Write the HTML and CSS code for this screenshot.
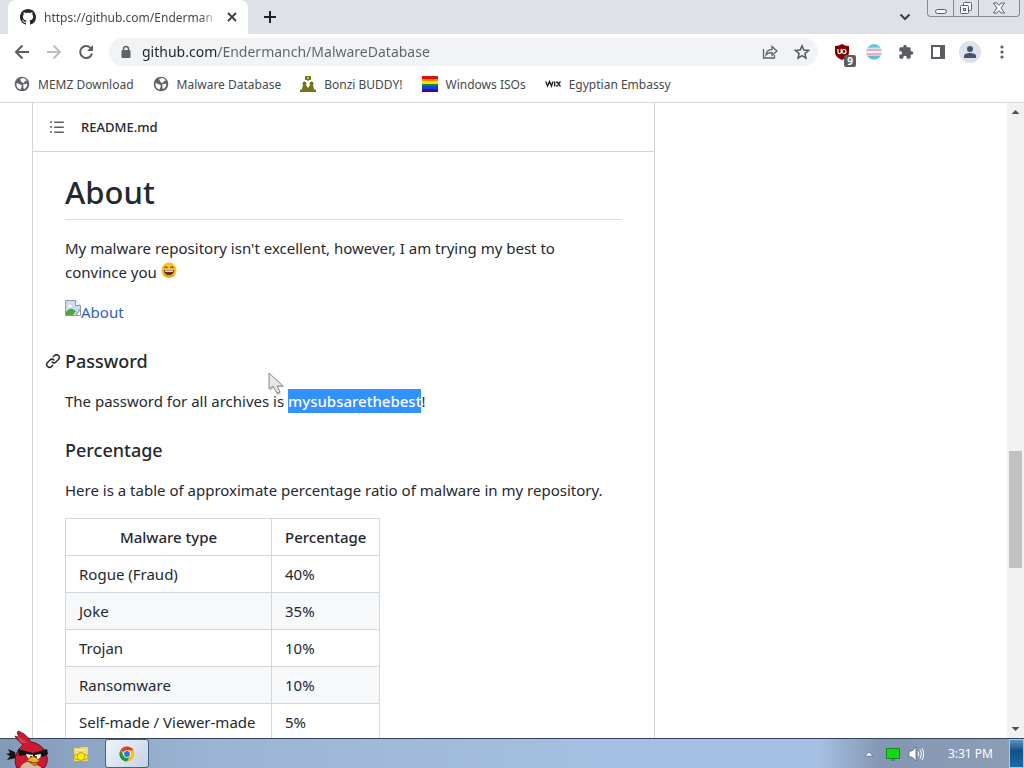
FILE: index.html
```html
<!DOCTYPE html>
<html lang="en">
<head>
  <meta charset="UTF-8" />
  <meta name="viewport" content="width=device-width, initial-scale=1.0" />
  <title>Endermanch/MalwareDatabase</title>
  <link rel="stylesheet" href="styles.css">
</head>
<body>
  <header class="browser">
    <div class="tabstrip">
      <div class="tab">
        <svg class="tab-icon" width="16" height="16" viewBox="0 0 16 16" fill="#24292f"><path d="M8 0C3.58 0 0 3.58 0 8c0 3.54 2.29 6.53 5.47 7.59.4.07.55-.17.55-.38 0-.19-.01-.82-.01-1.49-2.01.37-2.53-.49-2.69-.94-.09-.23-.48-.94-.82-1.13-.28-.15-.68-.52-.01-.53.63-.01 1.08.58 1.23.82.72 1.21 1.87.87 2.33.66.07-.52.28-.87.51-1.07-1.78-.2-3.64-.89-3.64-3.95 0-.87.31-1.59.82-2.15-.08-.2-.36-1.02.08-2.12 0 0 .67-.21 2.2.82.64-.18 1.32-.27 2-.27s1.36.09 2 .27c1.53-1.04 2.2-.82 2.2-.82.44 1.1.16 1.92.08 2.12.51.56.82 1.27.82 2.15 0 3.07-1.87 3.75-3.65 3.95.29.25.54.73.54 1.48 0 1.07-.01 1.93-.01 2.2 0 .21.15.46.55.38A8.01 8.01 0 0 0 16 8c0-4.42-3.58-8-8-8z"/></svg>
        <span class="tab-title">https://github.com/Enderman</span>
        <button class="icon-btn tab-close" aria-label="Close tab">
          <svg width="10" height="10" viewBox="0 0 10 10" stroke="#3c4043" stroke-width="1.8"><path d="M1 1l8 8M9 1l-8 8"/></svg>
        </button>
      </div>
      <button class="icon-btn new-tab" aria-label="New tab">
        <svg width="14" height="14" viewBox="0 0 14 14" stroke="#202124" stroke-width="2"><path d="M7 1v12M1 7h12"/></svg>
      </button>
      <button class="icon-btn tab-search" aria-label="Search tabs">
        <svg width="12" height="8" viewBox="0 0 12 8" fill="none" stroke="#3c4043" stroke-width="2"><path d="M1.500 1.500L6 6l4.500-4.500"/></svg>
      </button>
      <div class="window-buttons">
        <button aria-label="Minimize"><svg width="14" height="14" viewBox="0 0 14 14" fill="#fff" stroke="#5a6068"><rect x="1.500" y="8.500" width="11" height="4" rx="2"/></svg></button>
        <button aria-label="Restore"><svg width="14" height="14" viewBox="0 0 14 14" fill="#fff" stroke="#5a6068"><rect x="4.500" y="1.500" width="8" height="8" rx="1"/><rect x="1.500" y="4.500" width="8" height="8" rx="1"/><rect x="4.500" y="7.500" width="2" height="2"/></svg></button>
        <button class="wide" aria-label="Close"><svg width="14" height="12" viewBox="0 0 14 12" fill="#fff" stroke="#5a6068"><path d="M1.500 1h3.500l2 2.500L9 1h3.500L9 6l3.500 5H9L7 8.500 5 11H1.500L5 6z"/></svg></button>
      </div>
    </div>

    <div class="toolbar">
      <button class="icon-btn" aria-label="Back"><svg width="16" height="16" viewBox="0 0 16 16" fill="none" stroke="#5a5d61" stroke-width="2"><path d="M15 8H2M8.500 1.500L2 8l6.500 6.500"/></svg></button>
      <button class="icon-btn" aria-label="Forward"><svg width="16" height="16" viewBox="0 0 16 16" fill="none" stroke="#bbbdc0" stroke-width="2"><path d="M1 8h13M7.500 1.500L14 8l-6.500 6.500"/></svg></button>
      <button class="icon-btn" aria-label="Reload"><svg width="16" height="16" viewBox="0 0 16 16"><path d="M13 4.500A6 6 0 1 0 14 9.500" fill="none" stroke="#5a5d61" stroke-width="2"/><path d="M15 1v6H9z" fill="#5a5d61"/></svg></button>
      <form class="omnibox">
        <svg width="10" height="14" viewBox="0 0 10 14"><path d="M2.500 6V4a2.500 2.500 0 0 1 5 0v2" fill="none" stroke="#5f6368" stroke-width="1.500"/><rect x="0.500" y="5" width="9" height="8" rx="1" fill="#5f6368"/></svg>
        <input class="url" type="text" aria-label="Address" value="github.com/Endermanch/MalwareDatabase">
        <button class="icon-btn" type="button" aria-label="Share"><svg width="16" height="16" viewBox="0 0 16 16" fill="none" stroke="#5f6368" stroke-width="1.300"><path d="M1.500 5v9h11v-3M4 11c.3-3.500 2.400-5.500 6-5.700V2.500L15 7l-5 4.300V8.500C7.500 8.400 5.500 9.200 4 11z"/></svg></button>
        <button class="icon-btn" type="button" aria-label="Bookmark"><svg width="16" height="16" viewBox="0 0 16 16" fill="none" stroke="#55585c" stroke-width="1.500"><path d="M8 1.800l1.800 4.300 4.700.4-3.600 3.100 1.100 4.600L8 11.700l-4 2.500 1.100-4.600L1.500 6.500l4.700-.4z"/></svg></button>
      </form>
      <div class="extensions">
        <button class="icon-btn ublock" aria-label="uBlock Origin, 9 blocked">
          <svg width="16" height="16" viewBox="0 0 16 16"><path d="M8 0c2 1.300 4 2 7 2v6c0 4-3 6-7 8-4-2-7-4-7-8V2c3 0 5-.7 7-2z" fill="#800000"/><path d="M4 5v3a1.500 1.500 0 0 0 3.200 0V5" fill="none" stroke="#fff" stroke-width="1.200"/><circle cx="10" cy="7.500" r="2" fill="none" stroke="#fff" stroke-width="1.200"/></svg>
          <span class="count">9</span>
        </button>
        <button class="icon-btn" aria-label="Striped extension"><svg width="16" height="16" viewBox="0 0 16 16"><path d="M3 2a8 8 0 0 1 10 0l1 1H2z" fill="#62c6dc"/><path d="M2 3h12l1 1.500H1z" fill="#8fd3e2"/><path d="M.5 5h15v2H.5zM.5 9h15v2H.5z" fill="#efabba"/><path d="M0 7h16v2H0z" fill="#f3f3f3"/><path d="M1 11.500h14L14 13a8 8 0 0 1-12 0z" fill="#62bcdc"/></svg></button>
        <button class="icon-btn" aria-label="Extensions"><svg width="16" height="16" viewBox="0 0 24 24" fill="#5a5d61"><path d="M20.500 11H19V7a2 2 0 0 0-2-2h-4V3.500a2.500 2.500 0 0 0-5 0V5H4a2 2 0 0 0-2 2v3.800h1.500a2.700 2.700 0 0 1 0 5.400H2V20a2 2 0 0 0 2 2h3.800v-1.500a2.700 2.700 0 0 1 5.400 0V22H17a2 2 0 0 0 2-2v-4h1.500a2.500 2.500 0 0 0 0-5z"/></svg></button>
        <button class="icon-btn" aria-label="Side panel"><svg width="16" height="16" viewBox="0 0 16 16"><rect x="2" y="2" width="12" height="12" fill="none" stroke="#5a5d61" stroke-width="2"/><path d="M10 2h4v12h-4z" fill="#5a5d61"/></svg></button>
        <button class="icon-btn avatar" aria-label="Profile"><svg width="14" height="14" viewBox="0 0 14 14" fill="#44546a"><circle cx="7" cy="4" r="3"/><path d="M1 13v-2c0-2 3-3 6-3s6 1 6 3v2z"/></svg></button>
        <button class="icon-btn" aria-label="Menu"><svg width="4" height="14" viewBox="0 0 4 14" fill="#5a5d61"><circle cx="2" cy="2" r="1.600"/><circle cx="2" cy="7" r="1.600"/><circle cx="2" cy="12" r="1.600"/></svg></button>
      </div>
    </div>

    <nav class="bookmarks">
      <a href="#"><svg width="16" height="16" viewBox="0 0 16 16"><circle cx="8" cy="8" r="7.300" fill="#5f6368"/><path d="M2.500 7c2 .5 3 1 4 1.500S8.500 10 7.500 11l-1 2.500C4 13 2 10.500 2.500 7zM6 3l3-1c1.500 0 3 1 4 2.500L11 5l-1 2-2-.5L7 5zM9 8.500l4-1c1 2-1 5-3 5.500-1-1-.5-2-.5-3z" fill="#fff"/></svg>MEMZ Download</a>
      <a href="#"><svg width="16" height="16" viewBox="0 0 16 16"><circle cx="8" cy="8" r="7.300" fill="#5f6368"/><path d="M2.500 7c2 .5 3 1 4 1.500S8.500 10 7.500 11l-1 2.500C4 13 2 10.500 2.500 7zM6 3l3-1c1.500 0 3 1 4 2.500L11 5l-1 2-2-.5L7 5zM9 8.500l4-1c1 2-1 5-3 5.500-1-1-.5-2-.5-3z" fill="#fff"/></svg>Malware Database</a>
      <a href="#"><svg width="16" height="16" viewBox="0 0 16 16" fill="#75751a"><path d="M5 0h6v4H9L8 5.500 7 4H5z"/><path d="M7 1.500h2v1H7z" fill="#fff"/><circle cx="4.500" cy="7.500" r="2"/><circle cx="11.500" cy="7.500" r="2"/><path d="M0 16v-2l2-1 1-4h3l2 3 2-3h3l1 4 2 1v2z"/></svg>Bonzi BUDDY!</a>
      <a href="#"><svg width="16" height="16" viewBox="0 0 16 16"><path d="M0 0h16v3H0z" fill="#e01010"/><path d="M0 3h16v2H0z" fill="#f58a00"/><path d="M0 5h16v3H0z" fill="#f4e400"/><path d="M0 8h16v2H0z" fill="#108a2c"/><path d="M0 10h16v3H0z" fill="#1740d8"/><path d="M0 13h16v3H0z" fill="#4a0590"/></svg>Windows ISOs</a>
      <a href="#"><svg width="16" height="16" viewBox="0 0 16 16" fill="none" stroke="#222" stroke-width="1.400"><path d="M.8 5.500L2.500 10l2-4.500 2 4.500L8 5.500M9.700 5.500V10.500M11.500 5.500l4 5M15.500 5.500l-4 5"/></svg>Egyptian Embassy</a>
    </nav>
  </header>

  <div class="viewport">
    <main class="page">
      <section class="readme">
        <div class="readme-header">
          <button class="icon-btn" aria-label="Table of contents"><svg width="16" height="16" viewBox="0 0 16 16" fill="#57606a"><path d="M2 4a1 1 0 1 0 0-2 1 1 0 0 0 0 2zm3.750-1.500a.75.75 0 0 0 0 1.500h8.500a.75.75 0 0 0 0-1.500h-8.500zm0 5a.75.75 0 0 0 0 1.500h8.500a.75.75 0 0 0 0-1.500h-8.500zm0 5a.75.75 0 0 0 0 1.500h8.500a.75.75 0 0 0 0-1.500h-8.500zM3 8a1 1 0 1 1-2 0 1 1 0 0 1 2 0zm-1 6a1 1 0 1 0 0-2 1 1 0 0 0 0 2z"/></svg></button>
          <a href="#">README.md</a>
        </div>
        <article class="markdown">
          <h1>About</h1>
          <p>My malware repository isn't excellent, however, I am trying my best to convince you <svg class="emoji" role="img" aria-label="smile" width="16" height="16" viewBox="0 0 16 16"><circle cx="8" cy="8" r="7.600" fill="#fbc02d"/><path d="M1 11a7.600 7.600 0 0 0 14 0c-3 3-11 3-14 0z" fill="#f09a1a"/><path d="M3.500 6Q5 3.500 6.500 6M9.500 6Q11 3.500 12.500 6" fill="none" stroke="#5b3a12" stroke-width="1.200"/><path d="M2.800 8h10.400c0 3.500-2.200 5-5.200 5S2.800 11.500 2.800 8z" fill="#5b3312"/><path d="M3.800 8.500h8.400v1.300H3.800z" fill="#fff"/></svg></p>
          <p><a class="image-link" href="#"><svg width="16" height="16" viewBox="0 0 16 16"><path d="M.5.500h10l5 5V9L10 15.500H.5z" fill="#c9dcf5" stroke="#989898"/><path d="M10.500.500v5h5" fill="#fff" stroke="#989898"/><path d="M3 6a2 2 0 0 1 3-1 1.500 1.500 0 0 1 1 2H3z" fill="#fff"/><path d="M1 15v-3c3-4 6-4 8-2l2 1-3 4z" fill="#4ea53b"/><path d="M15.500 9v6.500H11z" fill="#fff" stroke="#989898"/></svg>About</a></p>
          <h3><a class="anchor" href="#" aria-label="Link to Password"><svg width="16" height="16" viewBox="0 0 16 16" fill="#24292f"><path d="M7.775 3.275a.75.75 0 0 0 1.060 1.060l1.250-1.250a2 2 0 1 1 2.830 2.830l-2.500 2.500a2 2 0 0 1-2.830 0 .75.75 0 0 0-1.060 1.060 3.500 3.500 0 0 0 4.950 0l2.500-2.500a3.500 3.500 0 0 0-4.950-4.950l-1.250 1.250zm-4.690 9.640a2 2 0 0 1 0-2.830l2.500-2.500a2 2 0 0 1 2.830 0 .75.75 0 0 0 1.060-1.060 3.500 3.500 0 0 0-4.950 0l-2.500 2.500a3.500 3.500 0 0 0 4.950 4.950l1.250-1.250a.75.75 0 0 0-1.060-1.060l-1.250 1.250a2 2 0 0 1-2.830 0z"/></svg></a>Password</h3>
          <p>The password for all archives is <strong class="selected">mysubsarethebest</strong>!</p>
          <h3>Percentage</h3>
          <p>Here is a table of approximate percentage ratio of malware in my repository.</p>
          <table>
            <thead>
              <tr><th class="type">Malware type</th><th class="ratio">Percentage</th></tr>
            </thead>
            <tbody>
              <tr><td>Rogue (Fraud)</td><td>40%</td></tr>
              <tr><td>Joke</td><td>35%</td></tr>
              <tr><td>Trojan</td><td>10%</td></tr>
              <tr><td>Ransomware</td><td>10%</td></tr>
              <tr><td>Self-made / Viewer-made</td><td>5%</td></tr>
            </tbody>
          </table>
        </article>
      </section>
    </main>
    <div class="scrollbar">
      <svg width="17" height="17" viewBox="0 0 17 17"><path d="M4.500 11L8.500 7l4 4z" fill="#505050"/></svg>
      <div class="track"><div class="thumb"></div></div>
      <svg width="17" height="17" viewBox="0 0 17 17"><path d="M4.500 6l4 4 4-4z" fill="#505050"/></svg>
    </div>
  </div>

  <footer class="taskbar">
    <button class="start" aria-label="Start">
      <svg width="44" height="38" viewBox="0 0 44 38"><path d="M10 22L3 19l2 4-4 1 4 2-3 4 9-2z" fill="#151515"/><path d="M18 15c-3-3-6-5-8-9 2 1 3 1 4 1-1-2-2-4-1-6 5 2 10 5 13 11 8 1 15 7 16 15 1 5-1 9-3 11H12c-3-5-3-16 6-23z" fill="#cc1a35" stroke="#3b0c12" stroke-width=".8"/><path d="M16 13c-2-3-3-5-4-7 4 2 8 4 10 7z" fill="#e43a50"/><path d="M15 38c2-5 7-7 12-6l10 6z" fill="#d9b99b"/><path d="M13 19l15 4 14-4 1 5-5 3-2-1-8 1-8-2-6 1z" fill="#101010"/><path d="M21 24l7 1v4c-3 1-6-1-7-5zM30 25l6-1c0 4-3 6-6 5z" fill="#fff"/><circle cx="26" cy="27" r="1" fill="#111"/><circle cx="31" cy="27" r="1" fill="#111"/><path d="M22 31c2-4 6-5 8-4l5 4-5 2z" fill="#f7b21b" stroke="#754004" stroke-width=".7"/><path d="M24 32l6 1 3-1-3 4z" fill="#e79012" stroke="#754004" stroke-width=".7"/></svg>
    </button>
    <button class="task" aria-label="Explorer">
      <svg width="16" height="16" viewBox="0 0 16 16"><path d="M1 2h6l1-1h7v14H1z" fill="#eadb67"/><path d="M2 4h12M3 7h10" stroke="#fff8b0"/><circle cx="3.500" cy="11" r="2.500" fill="#f8e733" stroke="#b9a514"/><circle cx="12.500" cy="11" r="2.500" fill="#f8e733" stroke="#b9a514"/><circle cx="8" cy="10.500" r="4" fill="#ffe713" stroke="#b9a514"/></svg>
    </button>
    <button class="task active" aria-label="Google Chrome">
      <svg width="16" height="16" viewBox="0 0 16 16"><circle cx="8" cy="8" r="7.500" fill="#fbc116"/><path d="M8 8L1.500 4.250A7.500 7.500 0 0 1 14.500 4.250H8z" fill="#e33b2e"/><path d="M1.500 4.250A7.500 7.500 0 0 0 8 15.500L11.200 9.800 8 8 4.750 9.800z" fill="#229342"/><circle cx="8" cy="8" r="3.800" fill="#fff"/><circle cx="8" cy="8" r="2.900" fill="#2673e8"/></svg>
    </button>
    <div class="tray">
      <svg class="tray-more" width="10" height="6" viewBox="0 0 10 6"><path d="M1 5l4-4 4 4z" fill="#fff" stroke="#56677c" stroke-width=".6"/></svg>
      <svg width="14" height="14" viewBox="0 0 14 14"><path d="M5 12h4v2H5z" fill="#65768c"/><rect x=".5" y="1.500" width="13" height="10" fill="#12d81a" stroke="#168b1c"/></svg>
      <svg width="16" height="16" viewBox="0 0 16 16"><path d="M1 5h3l4-4v14l-4-4H1z" fill="#fff" stroke="#4c5c70" stroke-width=".7"/><path d="M10 5.500q1.500 2.500 0 5M12 3.500q3 4.500 0 9M14 2q3.500 6 0 12" fill="none" stroke="#fff"/></svg>
      <time>3:31 PM</time>
    </div>
    <button class="show-desktop" aria-label="Show desktop"></button>
  </footer>

  <svg class="cursor" width="18" height="24" viewBox="0 0 18 24"><path d="M2 2v17l4-3 3 7 4-1-3-7h7z" fill="#777" opacity=".4"/><path d="M1 1v16l4-3 4 7 3-1-3-6h6z" fill="#e8e8e8" stroke="#8a8a8a"/></svg>
</body>
</html>
```
FILE: styles.css
```css
* {
  box-sizing: border-box;
}
body {
  margin: 0;
  height: 100vh;
  display: flex;
  flex-direction: column;
  overflow: hidden;
  font-family: "Noto Sans", "Open Sans", sans-serif;
  font-size: 15px;
  color: #24292f;
  background: #fff;
}
svg {
  display: block;
  flex: none;
}
a {
  color: inherit;
  text-decoration: none;
}
button {
  font: inherit;
  padding: 0;
  border: none;
  background: none;
  cursor: pointer;
}
.icon-btn {
  flex: none;
  width: 32px;
  height: 28px;
  display: flex;
  align-items: center;
  justify-content: center;
}

/* Browser */
.browser {
  flex: none;
  border-bottom: 1px solid #d5d7da;
}
.tabstrip {
  display: flex;
  height: 34px;
  background: #dee1e8;
}
.tab {
  display: flex;
  align-items: center;
  width: 240px;
  margin-left: 8px;
  padding: 0 6px 0 12px;
  border-radius: 8px 8px 0 0;
  background: #fff;
}
.tab-title {
  flex: 1;
  margin-left: 8px;
  white-space: nowrap;
  font-size: 12px;
  color: #45494d;
  -webkit-mask-image: linear-gradient(90deg, #000 90%, transparent);
  mask-image: linear-gradient(90deg, #000 90%, transparent);
}
.tab-close {
  width: 20px;
  margin-left: 4px;
}
.new-tab {
  height: 34px;
  margin-left: 6px;
}
.tab-search {
  height: 34px;
  margin-left: auto;
}
.window-buttons {
  display: flex;
  align-self: flex-start;
  height: 17px;
  margin: 0 4px 0 6px;
  border: 1px solid #858b94;
  border-top: none;
  border-radius: 0 0 4px 4px;
}
.window-buttons button {
  display: flex;
  align-items: center;
  justify-content: center;
  width: 25px;
}
.window-buttons button + button {
  border-left: 1px solid #858b94;
}
.window-buttons .wide {
  width: 41px;
}
.toolbar {
  display: flex;
  align-items: center;
  height: 36px;
  padding: 0 6px;
}
.omnibox {
  flex: 1;
  display: flex;
  align-items: center;
  height: 28px;
  margin-left: 7px;
  padding: 0 0 0 12px;
  border-radius: 14px;
  background: #f1f3f4;
}
.url {
  flex: 1;
  min-width: 0;
  height: 24px;
  margin-left: 11px;
  padding: 0 0 2px;
  border: none;
  outline: none;
  font: inherit;
  font-size: 14px;
  color: #5f6368;
  background: linear-gradient(90deg, #202124 76px, #5f6368 76px);
  -webkit-background-clip: text;
  background-clip: text;
  -webkit-text-fill-color: transparent;
}
.extensions {
  display: flex;
  align-items: center;
  margin-left: 8px;
}
.ublock {
  position: relative;
}
.count {
  position: absolute;
  right: 2px;
  bottom: -1px;
  width: 12px;
  height: 12px;
  border-radius: 2px;
  background: #5c5f62;
  color: #fff;
  font-size: 10px;
  font-weight: 700;
  line-height: 12px;
}
.avatar {
  width: 22px;
  height: 22px;
  margin: 0 5px;
  border-radius: 50%;
  background: #dce1ea;
}
.bookmarks {
  display: flex;
  align-items: center;
  gap: 19px;
  height: 32px;
  padding: 0 14px 4px;
  font-size: 12px;
  color: #45494d;
}
.bookmarks a {
  display: flex;
  align-items: center;
  gap: 8px;
}

/* Page */
.viewport {
  flex: 1;
  min-height: 0;
  display: flex;
}
.page {
  flex: 1;
  display: grid;
  grid-template-columns: minmax(0, 1fr) 296px;
  gap: 24px;
  padding: 0 32px;
  overflow: hidden;
}
.readme {
  border: 1px solid #d3d6d9;
  border-width: 0 1px;
}
.readme-header {
  display: flex;
  align-items: center;
  height: 49px;
  padding: 0 8px;
  border-bottom: 1px solid #d3d6d9;
  font-size: 13px;
  font-weight: 500;
}
.readme-header a {
  margin-left: 8px;
}
.markdown {
  padding: 18px 32px 32px;
  line-height: 24px;
}
.markdown h1 {
  margin: 0 0 16px;
  padding: 2px 0 7px;
  border-bottom: 1px solid #d8dee4;
  font-size: 31px;
  font-weight: 500;
  line-height: 40px;
}
.markdown h3 {
  margin: 24px 0 14px;
  font-size: 18px;
  font-weight: 500;
  line-height: 27px;
}
.markdown p {
  margin: 0 0 16px;
  padding-right: 8px;
}
.anchor {
  float: left;
  margin: 5px 0 0 -20px;
}
.emoji {
  display: inline-block;
  vertical-align: 0;
}
.image-link {
  display: flex;
  color: #2563c0;
}
.selected {
  display: inline-block;
  background: #3390ff;
  color: #fff;
  font-weight: 500;
}
table {
  border-collapse: collapse;
}
th,
td {
  padding: 6px 13px;
  border: 1px solid #d0d7de;
  white-space: nowrap;
}
th {
  font-weight: 500;
}
.type {
  width: 206px;
}
.ratio {
  width: 108px;
}
tbody tr:nth-child(2n) {
  background: #f6f8fa;
}

.scrollbar {
  flex: none;
  display: flex;
  flex-direction: column;
  width: 17px;
  background: #f1f1f1;
}
.track {
  flex: 1;
  padding: 0 2px;
}
.track::before {
  content: "";
  display: block;
  height: 55%;
}
.thumb {
  height: 117px;
  background: #c1c1c1;
}

/* Taskbar */
.taskbar {
  flex: none;
  display: flex;
  align-items: stretch;
  height: 30px;
  border-top: 1px solid #32435c;
  background: linear-gradient(90deg, #8399b8, #9cb4d3 20%, #a5c0e2 60%, #a5c0e2 80%, #8497b2 86%, #8c9db6);
}
.start {
  display: flex;
  align-items: flex-end;
  width: 56px;
  padding-left: 5px;
}
.task {
  display: flex;
  align-items: center;
  justify-content: center;
  width: 49px;
}
.task.active {
  width: 44px;
  border: 1px solid #4d5f78;
  border-radius: 3px;
  background: linear-gradient(135deg, #f1f5fa, #c3d2e6);
}
.tray {
  display: flex;
  align-items: center;
  gap: 8px;
  margin-left: auto;
  color: #fff;
  font-size: 12px;
}
.tray-more {
  margin-right: 4px;
}
.tray time {
  margin: 0 16px;
}
.show-desktop {
  width: 15px;
  border: 1px solid #a9c8e6;
  background: linear-gradient(#5f93c0, #124f88 40%, #1d6aa8);
}

.cursor {
  position: absolute;
  left: 268px;
  top: 372px;
}
```
